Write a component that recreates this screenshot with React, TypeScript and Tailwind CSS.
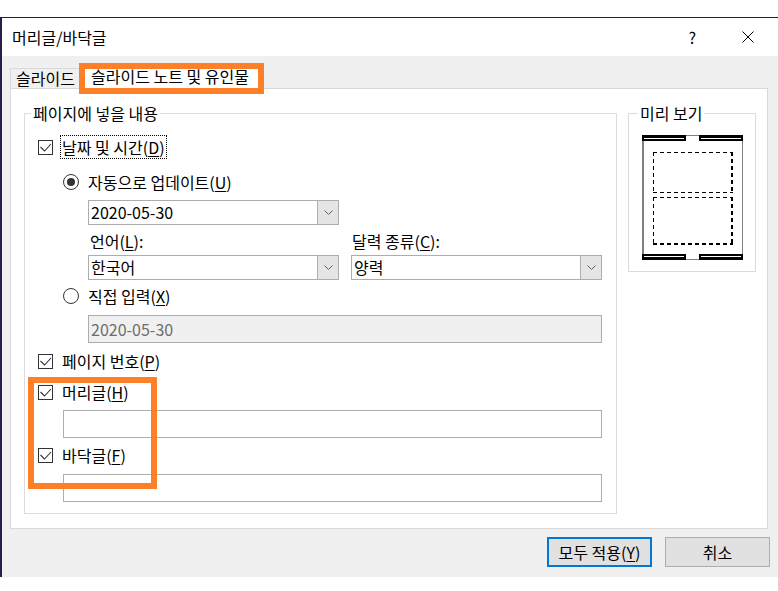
import React from 'react';

// Small building blocks for the Windows-style dialog controls

function CheckBox() {
  return (
    <span className="w-[15px] h-[15px] shrink-0 border border-[#333333] bg-white flex">
      <svg width="13" height="13" viewBox="0 0 13 13">
        <path d="M1.5 6 L5.5 10 L12 3" stroke="#333333" strokeWidth="1.1" fill="none" />
      </svg>
    </span>
  );
}

function Radio({ checked }: { checked?: boolean }) {
  return (
    <span className="w-[16px] h-[16px] shrink-0 rounded-full border border-[#333333] bg-white flex items-center justify-center">
      {checked && <span className="w-[8px] h-[8px] rounded-full bg-[#333333]" />}
    </span>
  );
}

function Chevron() {
  return (
    <svg width="9" height="5" viewBox="0 0 9 5">
      <path d="M0.5 0.5 L4.5 4.5 L8.5 0.5" stroke="#606060" strokeWidth="1" fill="none" />
    </svg>
  );
}

function Combo({ value }: { value: string }) {
  return (
    <div className="flex w-[251px] h-[25px] border border-[#adadad] bg-white">
      <span className="flex-1 pl-[2px] leading-[23px]">{value}</span>
      <span className="w-[21px] bg-[#e5e5e5] border-l border-[#adadad] flex items-center justify-center">
        <Chevron />
      </span>
    </div>
  );
}

function Mn({ children }: { children: React.ReactNode }) {
  return <span className="underline underline-offset-[2px]">{children}</span>;
}

function Preview() {
  return (
    <svg width="101" height="125" viewBox="0 0 101 125">
      <rect x="0" y="0" width="2" height="125" fill="#808080" />
      <rect x="100" y="0" width="1" height="125" fill="#808080" />
      <rect x="44" y="0" width="13" height="1" fill="#808080" />
      <rect x="44" y="124" width="13" height="1" fill="#808080" />
      <rect x="0" y="0" width="44" height="6" fill="#000" />
      <rect x="57" y="0" width="44" height="6" fill="#000" />
      <rect x="2" y="3" width="40" height="1" fill="#fff" />
      <rect x="59" y="3" width="40" height="1" fill="#fff" />
      <rect x="0" y="119" width="44" height="6" fill="#000" />
      <rect x="57" y="119" width="44" height="6" fill="#000" />
      <rect x="2" y="121" width="40" height="1" fill="#fff" />
      <rect x="59" y="121" width="40" height="1" fill="#fff" />
      <g stroke="#000" fill="none" strokeDasharray="4 3">
        <line x1="11" y1="17.5" x2="91" y2="17.5" strokeWidth="1" />
        <line x1="11.5" y1="17" x2="11.5" y2="58" strokeWidth="1" />
        <line x1="11" y1="57.5" x2="91" y2="57.5" strokeWidth="1" />
        <line x1="90" y1="17" x2="90" y2="58" strokeWidth="2" />
        <line x1="11" y1="62.5" x2="91" y2="62.5" strokeWidth="1" />
        <line x1="11.5" y1="62" x2="11.5" y2="110" strokeWidth="1" />
        <line x1="11" y1="109" x2="91" y2="109" strokeWidth="2" />
        <line x1="90" y1="62" x2="90" y2="110" strokeWidth="2" />
      </g>
    </svg>
  );
}

export default function App() {
  return (
    <div className="relative w-[778px] h-[591px] overflow-hidden bg-white text-[16px] text-black font-['Noto_Sans_CJK_KR','Noto_Sans',sans-serif]">
      <div className="h-[17px]" />

      {/* Dialog window */}
      <div className="h-[560px] border-t border-[#2b2033] flex">
        <div className="w-[2px] bg-[#251f4a]" />
        <div className="flex-1 flex flex-col">
          {/* Title bar */}
          <div className="h-[38px] flex items-center pl-[10px] pr-[24px]">
            <span className="leading-[20px]">머리글/바닥글</span>
            <span className="ml-auto leading-[20px]">?</span>
            <svg className="ml-[46px]" width="12" height="12" viewBox="0 0 12 12">
              <path d="M0.5 0.5 L11.5 11.5 M11.5 0.5 L0.5 11.5" stroke="#000" strokeWidth="1" />
            </svg>
          </div>

          {/* Body */}
          <div className="flex-1 bg-[#f0f0f0] flex flex-col">
            {/* Tabs */}
            <div className="relative h-[32px] flex items-end pl-[8px]">
              <div className="h-[20px] w-[71px] border-t border-l border-[#d9d9d9] pl-[5px] leading-[19px]">
                슬라이드
              </div>
              <div className="relative z-10 -mb-px h-[25px] w-[182px] bg-white border border-b-0 border-[#d9d9d9] pl-[9px] leading-[22px]">
                슬라이드 노트 및 유인물
              </div>
              <div className="absolute z-20 left-[77px] top-[7px] w-[185px] h-[31px] border-[6px] border-[#fd7f28]" />
            </div>

            {/* Tab panel */}
            <div className="ml-[8px] w-[758px] h-[441px] bg-white border border-[#d9d9d9] flex gap-[11px] pl-[13px] pt-[14px]">
              <fieldset className="w-[593px] h-[411px] border border-[#dcdcdc]">
                <legend className="ml-[6px] px-[2px] leading-[20px]">페이지에 넣을 내용</legend>
                <div className="pt-[12px] pl-[13px] flex flex-col">
                  <div className="h-[24px] flex items-center">
                    <CheckBox />
                    <span className="ml-[7px] h-[24px] border border-dotted border-black px-[1px] leading-[22px]">
                      날짜 및 시간(<Mn>D</Mn>)
                    </span>
                  </div>

                  <div className="mt-[11px] h-[24px] flex items-center ml-[25px]">
                    <Radio checked />
                    <span className="ml-[9px] leading-[22px]">
                      자동으로 업데이트(<Mn>U</Mn>)
                    </span>
                  </div>

                  <div className="mt-[6px] ml-[50px]">
                    <Combo value="2020-05-30" />
                  </div>

                  <div className="mt-[5px] ml-[50px] h-[22px] flex gap-[12px] leading-[22px]">
                    <span className="w-[251px] pl-[2px]">
                      언어(<Mn>L</Mn>):
                    </span>
                    <span className="w-[251px] pl-[1px]">
                      달력 종류(<Mn>C</Mn>):
                    </span>
                  </div>

                  <div className="mt-[3px] ml-[50px] flex gap-[12px]">
                    <Combo value="한국어" />
                    <Combo value="양력" />
                  </div>

                  <div className="mt-[4px] h-[24px] flex items-center ml-[25px]">
                    <Radio />
                    <span className="ml-[9px] leading-[22px]">
                      직접 입력(<Mn>X</Mn>)
                    </span>
                  </div>

                  <div className="mt-[7px] ml-[50px] w-[514px] h-[28px] border border-[#adadad] bg-[#f0f0f0] pl-[2px] leading-[26px] text-[#6d6d6d]">
                    2020-05-30
                  </div>

                  <div className="mt-[6px] h-[24px] flex items-center">
                    <CheckBox />
                    <span className="ml-[9px] leading-[22px]">
                      페이지 번호(<Mn>P</Mn>)
                    </span>
                  </div>

                  <div className="mt-[7px] h-[24px] flex items-center">
                    <CheckBox />
                    <span className="ml-[9px] leading-[22px]">
                      머리글(<Mn>H</Mn>)
                    </span>
                  </div>

                  <div className="mt-[6px] ml-[25px] w-[539px] h-[28px] border border-[#adadad] bg-white" />

                  <div className="mt-[5px] h-[24px] flex items-center">
                    <CheckBox />
                    <span className="ml-[9px] leading-[22px]">
                      바닥글(<Mn>F</Mn>)
                    </span>
                  </div>

                  <div className="mt-[7px] ml-[25px] w-[539px] h-[28px] border border-[#adadad] bg-white" />
                </div>
              </fieldset>

              <fieldset className="w-[128px] h-[169px] border border-[#dcdcdc]">
                <legend className="ml-[9px] px-[2px] leading-[20px]">미리 보기</legend>
                <div className="pt-[12px] pl-[13px]">
                  <Preview />
                </div>
              </fieldset>
            </div>

            {/* Buttons */}
            <div className="mt-[8px] pr-[8px] flex justify-end gap-[13px]">
              <button className="w-[105px] h-[30px] border-2 border-[#0078d7] bg-[#e1e1e1] leading-[26px]">
                모두 적용(<Mn>Y</Mn>)
              </button>
              <button className="w-[105px] h-[30px] border border-[#adadad] bg-[#e1e1e1] leading-[28px]">
                취소
              </button>
            </div>
          </div>
        </div>
      </div>

      {/* Annotation highlight */}
      <div className="absolute left-[28px] top-[377px] w-[129px] h-[112px] border-[6px] border-[#fd7f28]" />
    </div>
  );
}
